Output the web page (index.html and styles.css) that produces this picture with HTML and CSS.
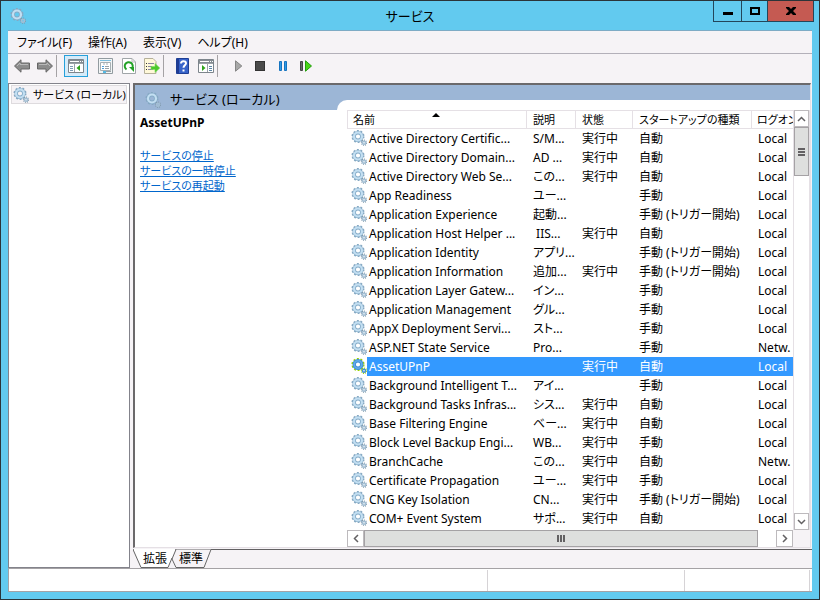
FILE: index.html
```
<!DOCTYPE html>
<html lang="ja">
<head>
    <meta charset="UTF-8">
    <meta name="viewport" content="width=device-width, initial-scale=1.0">
    <title>サービス</title>
    <link rel="stylesheet" href="styles.css">
</head>
<body>
    <svg class="defs" aria-hidden="true">
        <symbol id="gear" viewBox="0 0 16 16">
            <circle cx="7" cy="6.5" r="5.6" fill="none" stroke="#86a8c2" stroke-width="1.8" stroke-dasharray="1.9 1.62"/>
            <circle cx="7" cy="6.5" r="3.8" fill="none" stroke="#86acc8" stroke-width="3.4"/>
            <circle cx="7" cy="6.5" r="4" fill="none" stroke="#c3dff2" stroke-width="2.2"/>
            <circle cx="13" cy="12.7" r="2.5" fill="none" stroke="#7f97aa" stroke-width="1.3" stroke-dasharray="1 .9"/>
            <circle cx="13" cy="12.7" r="1.5" fill="none" stroke="#a3bfd4" stroke-width="1.6"/>
        </symbol>
        <symbol id="gear-selected" viewBox="0 0 16 16">
            <circle cx="7" cy="6.5" r="5.6" fill="none" stroke="#9bd400" stroke-width="2" stroke-dasharray="1.9 1.62"/>
            <circle cx="7" cy="6.5" r="3.8" fill="none" stroke="#3f8fd8" stroke-width="3.4"/>
            <circle cx="7" cy="6.5" r="3.8" fill="none" stroke="#62abe8" stroke-width="1.6"/>
            <circle cx="13" cy="12.7" r="2.5" fill="none" stroke="#9bd400" stroke-width="1.4" stroke-dasharray="1 .9"/>
            <circle cx="13" cy="12.7" r="1.5" fill="none" stroke="#3f8fd8" stroke-width="1.4"/>
        </symbol>
    </svg>

    <div class="window">
        <header class="titlebar">
            <svg class="icon title-icon"><use href="#gear"/></svg>
            <h1>サービス</h1>
            <div class="window-buttons">
                <button type="button" class="minimize" aria-label="最小化">
                    <svg width="10" height="8"><path d="M0 5h10v3H0z"/></svg>
                </button>
                <button type="button" class="maximize" aria-label="最大化">
                    <svg width="10" height="8"><path d="M0 0h10v8H0zM2 2v4h6V2z" fill-rule="evenodd"/></svg>
                </button>
                <button type="button" class="close" aria-label="閉じる">
                    <svg width="10" height="8"><path d="M0 0h3l2 2 2-2h3v1L7 4l3 3v1H7L5 6 3 8H0V7l3-3-3-3z"/></svg>
                </button>
            </div>
        </header>

        <div class="client">
            <nav class="menubar">
                <button type="button">ファイル(F)</button>
                <button type="button">操作(A)</button>
                <button type="button">表示(V)</button>
                <button type="button">ヘルプ(H)</button>
            </nav>

            <div class="toolbar">
                <button type="button" aria-label="戻る">
                    <svg width="16" height="14"><path d="M.5 7 7 .8V4h8.500v6H7v3.200z" fill="#8c8c8c" stroke="#666"/><path d="M3 7l3-3v1.500h8" fill="none" stroke="#b9b9b9"/></svg>
                </button>
                <button type="button" aria-label="進む">
                    <svg width="16" height="14"><path d="M15.500 7 9 .8V4H.5v6H9v3.200z" fill="#8c8c8c" stroke="#666"/><path d="M2 5.500h8V4l3 3" fill="none" stroke="#b9b9b9"/></svg>
                </button>
                <span class="separator"></span>
                <button type="button" class="active" aria-label="コンソール ツリーの表示">
                    <svg width="16" height="14">
                        <path d="M.5.500h15v13H.5z" fill="#fff" stroke="#7d858c"/>
                        <path d="M1 1h14v3H1z" fill="#858c92"/><path d="M2 2.500h9M12 2.500h1M14 2.500h1" stroke="#fff"/>
                        <path d="M1 4.500h14M6.500 5v8" stroke="#9aa1a6"/><path d="M2 7.500h3M2 9.500h3M2 11.500h3" stroke="#7c9cb4"/>
                        <path d="M12 6v6L8.500 9z" fill="#2fa41c"/>
                    </svg>
                </button>
                <button type="button" aria-label="プロパティ">
                    <svg width="16" height="16">
                        <path d="M.5.500h14v15H.5z" fill="#f2f5f6" stroke="#929ba0"/>
                        <path d="M2 2.500h11" stroke="#7dbedd"/><path d="M2.500 4.500h10v8h-10z" fill="#fff" stroke="#a7afb3"/>
                        <path d="M6 5v2M9 5v2" stroke="#a7afb3"/><path d="M4 8.500h2M4 10.500h2" stroke="#4c9ed9"/>
                        <path d="M7 8.500h4M7 10.500h4M8 13.500h5" stroke="#9aa1a6"/><path d="M5 14h3" stroke="#54b8e4" stroke-width="2"/>
                    </svg>
                </button>
                <button type="button" aria-label="最新の情報に更新">
                    <svg width="14" height="16">
                        <path d="M.5.500h9.500l3.500 3.500v11.500H.5z" fill="#fff" stroke="#a0a5a8"/><path d="M10 .5V4h3.500" fill="none" stroke="#bbb"/>
                        <path d="M4.500 11.500a4 4 0 1 1 5.500-1" fill="none" stroke="#23a126" stroke-width="2"/><path d="M7 9h5v5z" fill="#23a126"/>
                    </svg>
                </button>
                <button type="button" aria-label="一覧のエクスポート">
                    <svg width="16" height="16">
                        <path d="M.5.500h8.500l3 3v12H.5z" fill="#fff8d9" stroke="#b5b09a"/>
                        <path d="M2 5.500h1M2 8.500h1M2 11.500h1" stroke="#333"/><path d="M4 5.500h6M4 8.500h4M4 11.500h5" stroke="#8884a0"/>
                        <path d="M7 8.500h4V5.500l4.800 4.500-4.800 4.500v-3H7z" fill="#4cc92b" stroke="#7bd95e" stroke-width=".6"/>
                    </svg>
                </button>
                <span class="separator"></span>
                <button type="button" aria-label="ヘルプ">
                    <svg width="14" height="16">
                        <path d="M.5.500h12v15H.5z" fill="#3763c9" stroke="#1e3e94"/><path d="M1 1h2v14H1z" fill="#203c94"/>
                        <path d="M5 5.500c0-3 5-3 5-.3 0 2-2.500 2-2.500 4.600" fill="none" stroke="#fff" stroke-width="2"/><path d="M6.500 11.500h2v2h-2z" fill="#fff"/>
                    </svg>
                </button>
                <button type="button" aria-label="操作ウィンドウの表示">
                    <svg width="16" height="14">
                        <path d="M.5.500h15v13H.5z" fill="#fff" stroke="#7d858c"/>
                        <path d="M1 1h14v3H1z" fill="#858c92"/><path d="M2 2.500h9M12 2.500h1M14 2.500h1" stroke="#fff"/>
                        <path d="M1 4.500h14M9.500 5v8" stroke="#9aa1a6"/><path d="M11 7.500h3M11 9.500h3M11 11.500h3" stroke="#5e86a6"/>
                        <path d="M4 6v6l3.500-3z" fill="#2fa41c"/>
                    </svg>
                </button>
                <span class="separator"></span>
                <button type="button" aria-label="サービスの開始">
                    <svg width="12" height="12"><path d="M4.500.800v10.400L10.800 6z" fill="#a7a7a7" stroke="#858585"/></svg>
                </button>
                <button type="button" aria-label="サービスの停止">
                    <svg width="10" height="10"><rect x=".5" y=".5" width="9" height="9" fill="#4a4a4a" stroke="#333"/></svg>
                </button>
                <button type="button" aria-label="サービスの一時停止">
                    <svg width="8" height="10"><path d="M.5.500h2v9h-2zM5.500.500h2v9h-2z" fill="#2e9be6" stroke="#1673bf"/></svg>
                </button>
                <button type="button" aria-label="サービスの再起動">
                    <svg width="12" height="12"><path d="M.5 1.500h2v9h-2z" fill="#666" stroke="#444"/><path d="M5.500.800v10.400L11.500 6z" fill="#48d416" stroke="#239c0c"/></svg>
                </button>
            </div>

            <main class="panes">
                <aside class="tree">
                    <a href="#" class="tree-item">
                        <svg class="icon"><use href="#gear"/></svg>
                        <span>サービス (ローカル)</span>
                    </a>
                </aside>

                <section class="result">
                    <div class="result-body">
                        <div class="details">
                            <h2>
                                <svg class="icon"><use href="#gear"/></svg>
                                <span>サービス (ローカル)</span>
                            </h2>
                            <div class="details-content">
                                <h3>AssetUPnP</h3>
                                <ul>
                                    <li><a href="#">サービスの停止</a></li>
                                    <li><a href="#">サービスの一時停止</a></li>
                                    <li><a href="#">サービスの再起動</a></li>
                                </ul>
                            </div>
                        </div>

                        <div class="list">
                            <div class="table-wrap">
                                <table>
                                    <colgroup>
                                        <col class="col-name">
                                        <col class="col-desc">
                                        <col class="col-state">
                                        <col class="col-startup">
                                        <col>
                                    </colgroup>
                                    <thead>
                                        <tr>
                                            <th class="sorted">名前</th>
                                            <th>説明</th>
                                            <th>状態</th>
                                            <th>スタートアップの種類</th>
                                            <th>ログオン</th>
                                        </tr>
                                    </thead>
                                    <tbody>
                                        <tr><td><svg class="icon"><use href="#gear"/></svg><span>Active Directory Certific...</span></td><td>S/M...</td><td>実行中</td><td>自動</td><td>Local</td></tr>
                                        <tr><td><svg class="icon"><use href="#gear"/></svg><span>Active Directory Domain...</span></td><td>AD ...</td><td>実行中</td><td>自動</td><td>Local</td></tr>
                                        <tr><td><svg class="icon"><use href="#gear"/></svg><span>Active Directory Web Se...</span></td><td>この...</td><td>実行中</td><td>自動</td><td>Local</td></tr>
                                        <tr><td><svg class="icon"><use href="#gear"/></svg><span>App Readiness</span></td><td>ユー...</td><td></td><td>手動</td><td>Local</td></tr>
                                        <tr><td><svg class="icon"><use href="#gear"/></svg><span>Application Experience</span></td><td>起動...</td><td></td><td>手動 (トリガー開始)</td><td>Local</td></tr>
                                        <tr><td><svg class="icon"><use href="#gear"/></svg><span>Application Host Helper ...</span></td><td>&nbsp;IIS...</td><td>実行中</td><td>自動</td><td>Local</td></tr>
                                        <tr><td><svg class="icon"><use href="#gear"/></svg><span>Application Identity</span></td><td>アプリ...</td><td></td><td>手動 (トリガー開始)</td><td>Local</td></tr>
                                        <tr><td><svg class="icon"><use href="#gear"/></svg><span>Application Information</span></td><td>追加...</td><td>実行中</td><td>手動 (トリガー開始)</td><td>Local</td></tr>
                                        <tr><td><svg class="icon"><use href="#gear"/></svg><span>Application Layer Gatew...</span></td><td>イン...</td><td></td><td>手動</td><td>Local</td></tr>
                                        <tr><td><svg class="icon"><use href="#gear"/></svg><span>Application Management</span></td><td>グル...</td><td></td><td>手動</td><td>Local</td></tr>
                                        <tr><td><svg class="icon"><use href="#gear"/></svg><span>AppX Deployment Servi...</span></td><td>スト...</td><td></td><td>手動</td><td>Local</td></tr>
                                        <tr><td><svg class="icon"><use href="#gear"/></svg><span>ASP.NET State Service</span></td><td>Pro...</td><td></td><td>手動</td><td>Netw.</td></tr>
                                        <tr class="selected"><td><svg class="icon"><use href="#gear-selected"/></svg><span>AssetUPnP</span></td><td></td><td>実行中</td><td>自動</td><td>Local</td></tr>
                                        <tr><td><svg class="icon"><use href="#gear"/></svg><span>Background Intelligent T...</span></td><td>アイ...</td><td></td><td>手動</td><td>Local</td></tr>
                                        <tr><td><svg class="icon"><use href="#gear"/></svg><span>Background Tasks Infras...</span></td><td>シス...</td><td>実行中</td><td>自動</td><td>Local</td></tr>
                                        <tr><td><svg class="icon"><use href="#gear"/></svg><span>Base Filtering Engine</span></td><td>ベー...</td><td>実行中</td><td>自動</td><td>Local</td></tr>
                                        <tr><td><svg class="icon"><use href="#gear"/></svg><span>Block Level Backup Engi...</span></td><td>WB...</td><td>実行中</td><td>手動</td><td>Local</td></tr>
                                        <tr><td><svg class="icon"><use href="#gear"/></svg><span>BranchCache</span></td><td>この...</td><td>実行中</td><td>自動</td><td>Netw.</td></tr>
                                        <tr><td><svg class="icon"><use href="#gear"/></svg><span>Certificate Propagation</span></td><td>ユー...</td><td>実行中</td><td>手動</td><td>Local</td></tr>
                                        <tr><td><svg class="icon"><use href="#gear"/></svg><span>CNG Key Isolation</span></td><td>CN...</td><td>実行中</td><td>手動 (トリガー開始)</td><td>Local</td></tr>
                                        <tr><td><svg class="icon"><use href="#gear"/></svg><span>COM+ Event System</span></td><td>サポ...</td><td>実行中</td><td>自動</td><td>Local</td></tr>
                                    </tbody>
                                </table>
                            </div>
                            <div class="scrollbar vertical">
                                <button type="button" aria-label="上へ"><svg width="9" height="6"><path d="M1 5l3.500-3.500L8 5"/></svg></button>
                                <div class="thumb"><svg width="8" height="8"><path d="M0 1h7M0 4h7M0 7h7"/></svg></div>
                                <button type="button" aria-label="下へ"><svg width="9" height="6"><path d="M1 1l3.500 3.500L8 1"/></svg></button>
                            </div>
                            <div class="scrollbar horizontal">
                                <button type="button" aria-label="左へ"><svg width="6" height="9"><path d="M5 1L1.500 4.500 5 8"/></svg></button>
                                <div class="thumb"><svg width="8" height="8"><path d="M1 0v7M4 0v7M7 0v7"/></svg></div>
                                <button type="button" aria-label="右へ"><svg width="6" height="9"><path d="M1 1l3.500 3.500L1 8"/></svg></button>
                            </div>
                            <div class="corner"></div>
                        </div>
                    </div>

                    <div class="tabs">
                        <svg class="tab-shapes" width="80" height="19">
                            <path d="M.5 0 8 18.500h27L42.500 0z" fill="#fff"/>
                            <path d="M43 .5 39 10l4 8.500h28L78 .5" fill="#f6f3f6" stroke="#666"/>
                            <path d="M0 .5 8 18.500h27L39 9" fill="none" stroke="#666"/>
                        </svg>
                        <button type="button">拡張</button>
                        <button type="button">標準</button>
                    </div>
                </section>
            </main>

            <footer class="statusbar">
                <div class="status-main"></div>
                <div class="status-cell"></div>
                <div class="status-end"></div>
            </footer>
        </div>
    </div>
</body>
</html>
```
FILE: styles.css
```
* {
    margin: 0;
    padding: 0;
    box-sizing: border-box;
}

body {
    font-family: "Noto Sans", "Noto Sans CJK JP", sans-serif;
    font-size: 12px;
    line-height: 19px;
    font-feature-settings: "palt";
    color: #000;
}

button {
    font: inherit;
    font-feature-settings: inherit;
    color: inherit;
    background: none;
    border: none;
}

svg {
    display: block;
    flex: none;
}

.defs {
    position: absolute;
    width: 0;
    height: 0;
}

.icon {
    width: 16px;
    height: 16px;
}

.window {
    display: flex;
    flex-direction: column;
    min-height: 100vh;
    padding: 0 7px 7px;
    background: #62caef;
    border: 1px solid #2b3439;
}

/* title bar */
.titlebar {
    display: grid;
    grid-template-columns: 100px 1fr 100px;
    height: 29px;
}

.title-icon {
    margin: 7px 0 0 2px;
}

.titlebar h1 {
    font-size: 13px;
    font-weight: 400;
    line-height: 30px;
    text-align: center;
}

.window-buttons {
    display: flex;
    justify-self: end;
    height: 21px;
    margin-right: -2px;
    border: 1px solid #23465a;
    border-top: none;
}

.window-buttons button {
    display: flex;
    align-items: center;
    justify-content: center;
    width: 28px;
    border-right: 1px solid #23465a;
}

.window-buttons .maximize {
    width: 26px;
}

.window-buttons .close {
    width: 45px;
    background: #c55a52;
    border-right: none;
}

/* menu and toolbar */
.client {
    display: flex;
    flex-direction: column;
    flex: 1;
    background: #f6f3f6;
    border-top: 1px solid #7eabc5;
}

.menubar {
    display: flex;
    height: 23px;
    padding-left: 1px;
    border-bottom: 1px solid #b3b0b9;
}

.menubar button {
    padding: 0 8px;
}

.toolbar {
    display: flex;
    height: 29px;
    padding: 1px 2px 6px;
}

.toolbar button {
    display: flex;
    align-items: center;
    justify-content: center;
    width: 23px;
}

.toolbar .active {
    width: 24px;
    margin-right: 6px;
    background: #d5ebf9;
    border: 1px solid #26a0da;
}

.separator {
    width: 1px;
    margin-right: 7px;
    background: #a5a2a5;
}

/* panes */
.panes {
    display: flex;
    flex: 1;
    gap: 3px;
}

.tree {
    width: 122px;
    background: #fff;
    border: 1px solid #83838b;
}

.tree-item {
    display: flex;
    align-items: center;
    gap: 4px;
    height: 19px;
    margin: 1px 2px;
    padding-left: 1px;
    color: #000;
    font-size: 11px;
    text-decoration: none;
    white-space: nowrap;
    background: #f6f3f6;
    border: 1px solid #dedbde;
}

.result {
    display: flex;
    flex-direction: column;
    flex: 1;
    min-width: 0;
}

.result-body {
    display: flex;
    flex: 1;
    margin-right: 1px;
    background: #9cb6d6;
    border-top: 2px solid #6b696b;
    border-left: 2px solid #6b696b;
    border-right: 1px solid #e5e0e5;
    border-bottom: 1px solid #e5e0e5;
}

.details {
    display: flex;
    flex-direction: column;
    width: 202px;
}

.details h2 {
    display: flex;
    align-items: center;
    gap: 9px;
    height: 25px;
    padding: 4px 0 0 10px;
    font-size: 13px;
    font-weight: 400;
}

.details-content {
    flex: 1;
    padding: 3px 5px;
    background: #fff;
}

.details h3 {
    margin-bottom: 16px;
    font-size: 12px;
}

.details ul {
    list-style: none;
    font-size: 11px;
    line-height: 15px;
}

.details a {
    color: #0066cc;
}

/* service list */
.list {
    display: grid;
    grid-template-columns: minmax(0, 1fr) 17px;
    grid-template-rows: 1fr 17px;
    flex: 1;
    min-width: 0;
    margin-top: 15px;
    padding: 10px 0 0 10px;
    background: #fff;
    border-top-left-radius: 10px;
}

.table-wrap {
    overflow: hidden;
}

table {
    width: 100%;
    table-layout: fixed;
    border-collapse: separate;
    border-spacing: 0;
}

.col-name {
    width: 180px;
}

.col-desc {
    width: 49px;
}

.col-state {
    width: 57px;
}

.col-startup {
    width: 119px;
}

th,
td {
    height: 19px;
    padding-left: 6px;
    overflow: hidden;
    text-align: left;
    white-space: nowrap;
}

th {
    position: relative;
    font-size: 11px;
    font-weight: 400;
    line-height: 17px;
    border: 1px solid #e5e0e5;
    border-left: none;
}

th:first-child {
    padding-left: 5px;
    border-left: 1px solid #e5e0e5;
}

th:last-child {
    padding-left: 5px;
    border-right: none;
}

.sorted::after {
    content: "";
    position: absolute;
    top: 2px;
    left: 50%;
    margin-left: -5px;
    border: 4px solid transparent;
    border-top: none;
    border-bottom-color: #000;
}

td:first-child {
    display: flex;
    padding-left: 4px;
}

td .icon {
    margin-top: 1px;
}

td span {
    flex: 1;
    padding-left: 2px;
}

.selected {
    color: #fff;
}

.selected td:not(:first-child),
.selected span {
    background: #3399ff;
}

/* scrollbars */
.scrollbar {
    display: flex;
    background: #fff;
}

.scrollbar button,
.scrollbar .thumb {
    display: flex;
    align-items: center;
    justify-content: center;
    border: 1px solid #bdbabd;
}

.scrollbar button {
    flex: none;
    width: 17px;
    height: 17px;
}

.scrollbar .thumb {
    background: #dedfde;
    border-color: #a5a2a5;
}

.scrollbar path {
    fill: none;
    stroke: #636163;
    stroke-width: 2;
}

.scrollbar button path {
    stroke-width: 1.5;
}

.vertical {
    flex-direction: column;
    border-left: 1px solid #e5e0e5;
    border-right: 1px solid #e5e0e5;
}

.vertical button {
    width: 100%;
}

.vertical .thumb {
    height: 49px;
    margin-bottom: auto;
}

.horizontal .thumb {
    width: 89%;
    max-width: calc(100% - 52px);
    margin-right: auto;
}

.corner {
    background: #f6f3f6;
}

/* tabs */
.tabs {
    position: relative;
    display: flex;
    gap: 12px;
    height: 19px;
    margin-top: 1px;
    padding-left: 10px;
    border-top: 1px solid #636163;
}

.tab-shapes {
    position: absolute;
    top: -1px;
    left: 0;
}

.tabs button {
    position: relative;
    height: 18px;
    line-height: 18px;
}

/* status bar */
.statusbar {
    display: flex;
    height: 24px;
    padding-top: 1px;
    background: #fff;
    border: 1px solid #a5a2a5;
    border-right: none;
}

.status-main {
    flex: 1;
    border-right: 1px solid #d6d3d6;
}

.status-cell {
    width: 197px;
    border-right: 1px solid #d6d3d6;
}

.status-end {
    width: 125px;
    margin-right: 2px;
    border-right: 1px solid #d6d3d6;
}
```
